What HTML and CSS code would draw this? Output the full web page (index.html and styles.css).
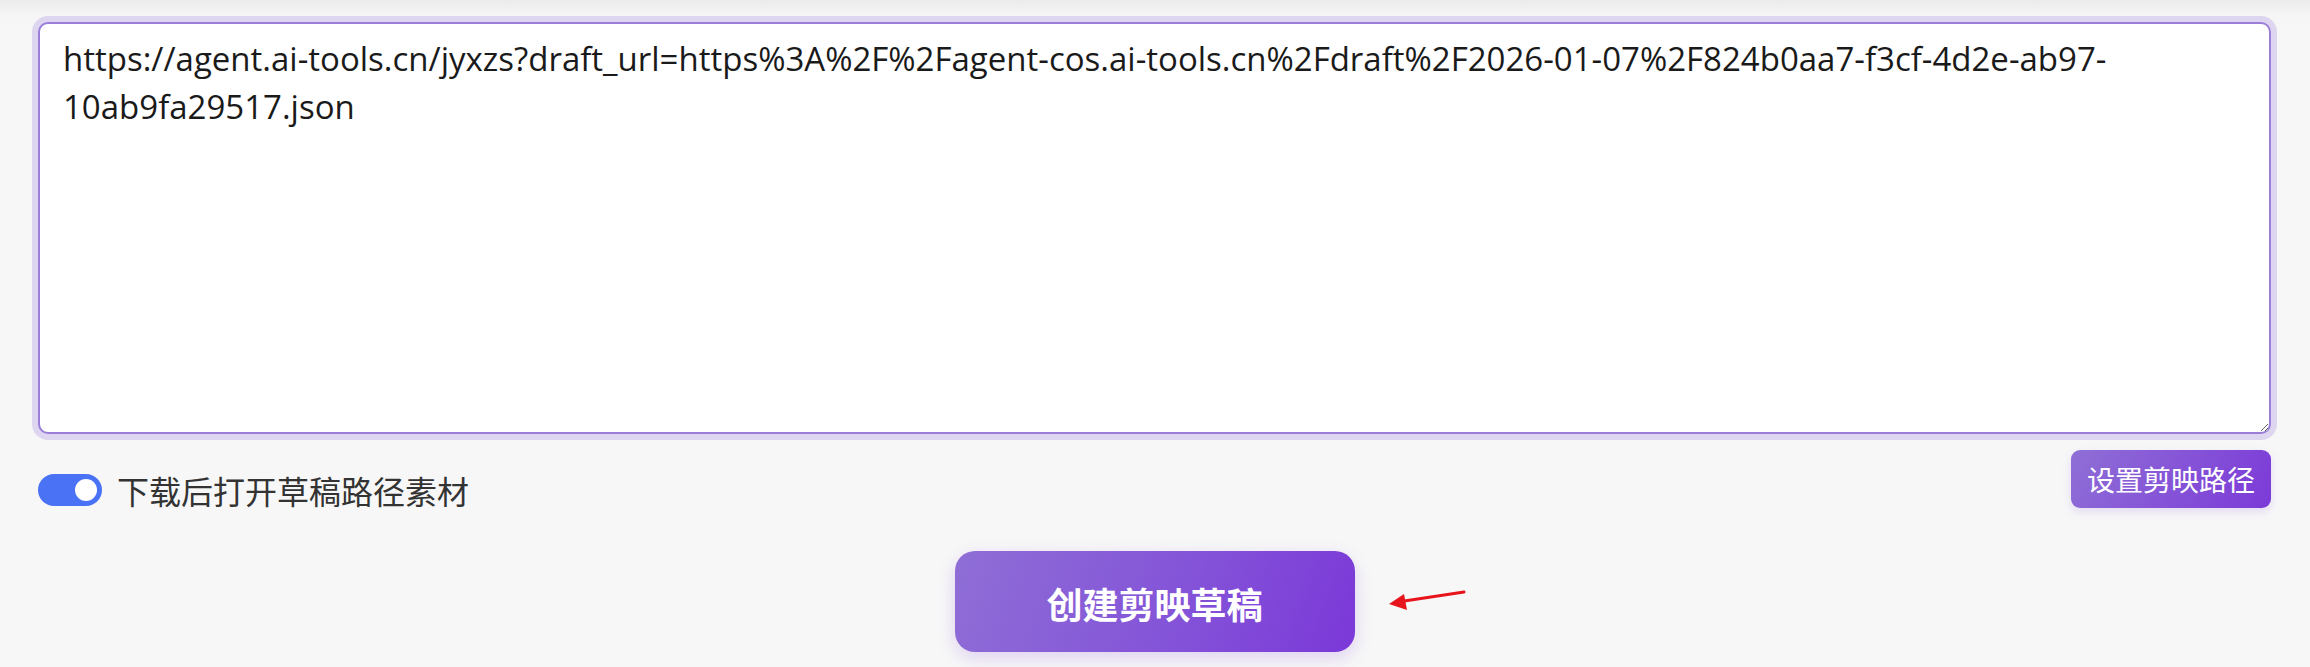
FILE: index.html
```html
<!DOCTYPE html>
<html lang="zh-CN">
<head>
<meta charset="utf-8">
<title>创建剪映草稿</title>
<link rel="stylesheet" href="styles.css">
</head>
<body>
<div class="page">
  <textarea class="url-input" spellcheck="false">https://agent.ai-tools.cn/jyxzs?draft_url=https%3A%2F%2Fagent-cos.ai-tools.cn%2Fdraft%2F2026-01-07%2F824b0aa7-f3cf-4d2e-ab97-10ab9fa29517.json</textarea>
  <div class="options">
    <label class="toggle-group">
      <span class="switch"><span class="knob"></span></span>
      <span class="toggle-label">下载后打开草稿路径素材</span>
    </label>
    <button class="path-btn" type="button">设置剪映路径</button>
  </div>
  <div class="actions">
    <button class="create-btn" type="button">创建剪映草稿</button>
    <svg class="arrow" viewBox="0 0 81 27" width="81" height="27" aria-hidden="true">
      <line x1="78" y1="6" x2="15" y2="15.6" stroke="#e8141c" stroke-width="3" stroke-linecap="round"/>
      <polygon points="3,18 18,8 21,24" fill="#e8141c"/>
    </svg>
  </div>
</div>
</body>
</html>
```
FILE: styles.css
```css
html, body {
  margin: 0;
  padding: 0;
}
body {
  background: linear-gradient(to bottom, #ebebeb 0, #f5f5f5 14px, #f7f7f7 30px);
  font-family: "Open Sans", "Noto Sans CJK SC", sans-serif;
  min-height: 667px;
}
.page {
  padding: 22px 39px 0 38px;
}
.url-input {
  display: block;
  box-sizing: border-box;
  width: 100%;
  height: 412px;
  margin: 0;
  padding: 11px 23px;
  border: 2px solid #9a7ed8;
  border-radius: 10px;
  box-shadow: 0 0 0 6px #ded6f0;
  background: #ffffff;
  color: #1a1a1a;
  font-family: "Open Sans", "Noto Sans CJK SC", sans-serif;
  font-size: 33px;
  line-height: 48px;
  outline: none;
  resize: both;
}
.options {
  display: flex;
  justify-content: space-between;
  align-items: flex-start;
  margin-top: 16px;
}
.toggle-group {
  display: flex;
  align-items: center;
  gap: 15px;
  margin-top: 19px;
}
.switch {
  display: flex;
  align-items: center;
  justify-content: flex-end;
  box-sizing: border-box;
  width: 64px;
  height: 32px;
  padding: 0 5px;
  border-radius: 16px;
  background: #4a72f4;
}
.knob {
  width: 22px;
  height: 22px;
  border-radius: 50%;
  background: #ffffff;
}
.toggle-label {
  font-family: "Noto Sans CJK SC", sans-serif;
  font-size: 32px;
  line-height: 42px;
  color: #333333;
}
.path-btn {
  width: 200px;
  height: 58px;
  padding: 0;
  border: none;
  border-radius: 9px;
  background: linear-gradient(120deg, #8f6fd6 0%, #7c3ad8 100%);
  box-shadow: 0 4px 10px rgba(124, 58, 216, 0.15);
  color: #ffffff;
  font-family: "Noto Sans CJK SC", sans-serif;
  font-size: 28px;
  line-height: 58px;
}
.actions {
  position: relative;
  display: flex;
  justify-content: center;
  margin-top: 40px;
}
.create-btn {
  width: 400px;
  height: 101px;
  padding: 2px 0 0;
  border: none;
  border-radius: 20px;
  background: linear-gradient(110deg, #8f6ed6 0%, #8454d8 55%, #7b38d8 100%);
  box-shadow: 0 6px 18px rgba(124, 58, 216, 0.2);
  color: #ffffff;
  font-family: "Noto Sans CJK SC", sans-serif;
  font-size: 36px;
  font-weight: 700;
}
.arrow {
  position: absolute;
  left: calc(50% + 231px);
  top: 35px;
}
```
